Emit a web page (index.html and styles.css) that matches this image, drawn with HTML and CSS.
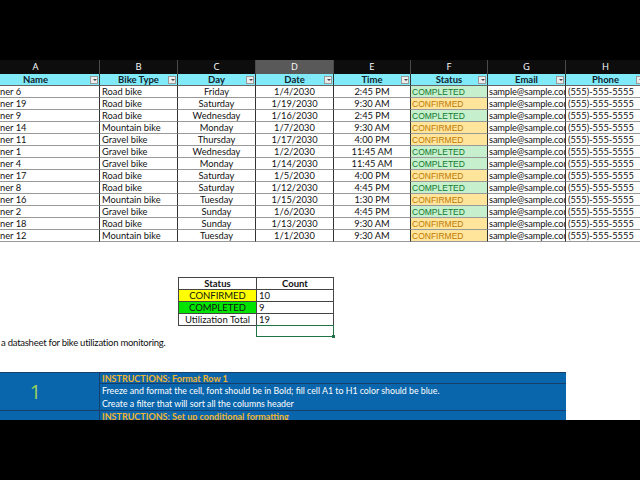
FILE: index.html
```html
<!DOCTYPE html>
<html>
<head>
<meta charset="utf-8">
<link rel="stylesheet" href="styles.css">
</head>
<body>
<div class="topbar"></div>
<main class="area">
  <div class="sheet">
    <div class="col-letter">A</div><div class="col-letter">B</div><div class="col-letter">C</div><div class="col-letter sel">D</div><div class="col-letter">E</div><div class="col-letter">F</div><div class="col-letter">G</div><div class="col-letter">H</div>

    <div class="hdr">Name<span class="filter"></span></div><div class="hdr">Bike Type<span class="filter"></span></div><div class="hdr">Day<span class="filter"></span></div><div class="hdr">Date<span class="filter"></span></div><div class="hdr">Time<span class="filter"></span></div><div class="hdr">Status<span class="filter"></span></div><div class="hdr">Email<span class="filter"></span></div><div class="hdr">Phone<span class="filter"></span></div>

    <div class="c name">Runner 6</div><div class="c">Road bike</div><div class="c ctr">Friday</div><div class="c ctr">1/4/2030</div><div class="c ctr">2:45 PM</div><div class="c st done">COMPLETED</div><div class="c em">sample@sample.com</div><div class="c">(555)-555-5555</div>
    <div class="c name">Runner 19</div><div class="c">Road bike</div><div class="c ctr">Saturday</div><div class="c ctr">1/19/2030</div><div class="c ctr">9:30 AM</div><div class="c st conf">CONFIRMED</div><div class="c em">sample@sample.com</div><div class="c">(555)-555-5555</div>
    <div class="c name">Runner 9</div><div class="c">Road bike</div><div class="c ctr">Wednesday</div><div class="c ctr">1/16/2030</div><div class="c ctr">2:45 PM</div><div class="c st done">COMPLETED</div><div class="c em">sample@sample.com</div><div class="c">(555)-555-5555</div>
    <div class="c name">Runner 14</div><div class="c">Mountain bike</div><div class="c ctr">Monday</div><div class="c ctr">1/7/2030</div><div class="c ctr">9:30 AM</div><div class="c st conf">CONFIRMED</div><div class="c em">sample@sample.com</div><div class="c">(555)-555-5555</div>
    <div class="c name">Runner 11</div><div class="c">Gravel bike</div><div class="c ctr">Thursday</div><div class="c ctr">1/17/2030</div><div class="c ctr">4:00 PM</div><div class="c st conf">CONFIRMED</div><div class="c em">sample@sample.com</div><div class="c">(555)-555-5555</div>
    <div class="c name">Runner 1</div><div class="c">Gravel bike</div><div class="c ctr">Wednesday</div><div class="c ctr">1/2/2030</div><div class="c ctr">11:45 AM</div><div class="c st done">COMPLETED</div><div class="c em">sample@sample.com</div><div class="c">(555)-555-5555</div>
    <div class="c name">Runner 4</div><div class="c">Gravel bike</div><div class="c ctr">Monday</div><div class="c ctr">1/14/2030</div><div class="c ctr">11:45 AM</div><div class="c st done">COMPLETED</div><div class="c em">sample@sample.com</div><div class="c">(555)-555-5555</div>
    <div class="c name">Runner 17</div><div class="c">Road bike</div><div class="c ctr">Saturday</div><div class="c ctr">1/5/2030</div><div class="c ctr">4:00 PM</div><div class="c st conf">CONFIRMED</div><div class="c em">sample@sample.com</div><div class="c">(555)-555-5555</div>
    <div class="c name">Runner 8</div><div class="c">Road bike</div><div class="c ctr">Saturday</div><div class="c ctr">1/12/2030</div><div class="c ctr">4:45 PM</div><div class="c st done">COMPLETED</div><div class="c em">sample@sample.com</div><div class="c">(555)-555-5555</div>
    <div class="c name">Runner 16</div><div class="c">Mountain bike</div><div class="c ctr">Tuesday</div><div class="c ctr">1/15/2030</div><div class="c ctr">1:30 PM</div><div class="c st conf">CONFIRMED</div><div class="c em">sample@sample.com</div><div class="c">(555)-555-5555</div>
    <div class="c name">Runner 2</div><div class="c">Gravel bike</div><div class="c ctr">Sunday</div><div class="c ctr">1/6/2030</div><div class="c ctr">4:45 PM</div><div class="c st done">COMPLETED</div><div class="c em">sample@sample.com</div><div class="c">(555)-555-5555</div>
    <div class="c name">Runner 18</div><div class="c">Road bike</div><div class="c ctr">Sunday</div><div class="c ctr">1/13/2030</div><div class="c ctr">9:30 AM</div><div class="c st conf">CONFIRMED</div><div class="c em">sample@sample.com</div><div class="c">(555)-555-5555</div>
    <div class="c name">Runner 12</div><div class="c">Mountain bike</div><div class="c ctr">Tuesday</div><div class="c ctr">1/1/2030</div><div class="c ctr">9:30 AM</div><div class="c st conf">CONFIRMED</div><div class="c em">sample@sample.com</div><div class="c">(555)-555-5555</div>
  </div>

  <div class="summary">
    <div class="s sh">Status</div><div class="s sh last">Count</div>
    <div class="s sctr yel">CONFIRMED</div><div class="s last">10</div>
    <div class="s sctr grn">COMPLETED</div><div class="s last">9</div>
    <div class="s sctr">Utilization Total</div><div class="s last">19</div>
    <div class="blank"></div><div class="active"><span class="handle"></span></div>
  </div>

  <p class="note">a datasheet for bike utilization monitoring.</p>

  <div class="instr">
    <div class="num">1</div>
    <div class="ititle">INSTRUCTIONS: Format Row 1</div>
    <div class="itext">Freeze and format the cell, font should be in Bold; fill cell A1 to H1 color should be blue.</div>
    <div class="itext last">Create a filter that will sort all the columns header</div>
    <div class="num2"></div>
    <div class="ititle">INSTRUCTIONS: Set up conditional formatting</div>
  </div>
</main>
<div class="bottombar"></div>
</body>
</html>
```

FILE: styles.css
```css
html, body {
  margin: 0;
  padding: 0;
  background: #000;
  overflow: hidden;
  width: 640px;
  height: 480px;
}
.topbar { height: 60px; background: #000; }
.bottombar { height: 60px; background: #000; }
.area {
  height: 360px;
  background: #fff;
  overflow: hidden;
  font-family: Lato, "Open Sans", sans-serif;
  color: #111;
}
.sheet {
  display: grid;
  grid-template-columns: 128px 78px 78px 78px 77px 77px 78px 80px;
  grid-template-rows: 14px 12px;
  grid-auto-rows: 12px;
  margin-left: -28px;
  width: 674px;
}
.col-letter {
  height: 14px;
  background: #0d0d0d;
  color: #fff;
  font-family: "Open Sans", sans-serif;
  font-size: 9.5px;
  line-height: 14px;
  text-align: center;
  border-right: 1px solid #4a4a4a;
  box-sizing: border-box;
}
.col-letter.sel { background: #595959; }
.hdr {
  position: relative;
  background: #80eaf8;
  font-weight: 700;
  font-size: 9.5px;
  line-height: 12px;
  text-align: center;
  color: #10222e;
  border-right: 1px solid #333;
  border-bottom: 1px solid #666;
  box-sizing: border-box;
}
.filter {
  position: absolute;
  right: 1px;
  top: 2px;
  width: 8px;
  height: 8px;
  box-sizing: border-box;
  background: #ececec;
  border: 1px solid #9a9a9a;
}
.filter::after {
  content: "";
  position: absolute;
  left: 1.5px;
  top: 2px;
  border-left: 2px solid transparent;
  border-right: 2px solid transparent;
  border-top: 2px solid #444;
}
.c {
  font-size: 9.3px;
  line-height: 12px;
  white-space: nowrap;
  overflow: hidden;
  text-overflow: clip;
  padding-left: 2px;
  border-right: 1px solid #333;
  border-bottom: 1px solid #999;
  box-sizing: border-box;
}
.c.name { padding-left: 12px; }
.c.ctr { text-align: center; padding-left: 0; }
.c.em { padding-left: 1px; letter-spacing: -0.15px; }
.c.st {
  font-family: "Liberation Sans", Arial, sans-serif;
  font-size: 8.5px;
  padding-left: 1px;
}
.c.done { background: #c6efce; color: #117a2b; }
.c.conf { background: #ffe49c; color: #c07a00; }

.summary {
  display: grid;
  grid-template-columns: 78px 78px;
  grid-auto-rows: 12px;
  margin: 35px 0 0 178px;
  width: 156px;
}
.s {
  font-size: 9.5px;
  line-height: 11px;
  border-left: 1px solid #444;
  border-top: 1px solid #444;
  box-sizing: border-box;
  padding-left: 2px;
  white-space: nowrap;
}
.s.last { border-right: 1px solid #444; }
.s.sh { font-weight: 700; text-align: center; padding-left: 0; }
.s.sctr { text-align: center; padding-left: 0; }
.s.yel { background: #ffff00; }
.s.grn { background: #00e400; }
.blank { border-top: 1px solid #444; }
.active {
  position: relative;
  border: 1px solid #217346;
  height: 12px;
  box-sizing: border-box;
}
.handle {
  position: absolute;
  right: -2px;
  bottom: -2px;
  width: 3px;
  height: 3px;
  background: #217346;
}
.note {
  margin: 0;
  padding-left: 1px;
  font-size: 9.5px;
  line-height: 12px;
  letter-spacing: -0.25px;
}
.instr {
  display: grid;
  grid-template-columns: 128px 466px;
  grid-template-rows: 11px 13px 14px 12px;
  width: 594px;
  margin: 23px 0 0 -28px;
  background: #0a66ac;
  border-top: 1px solid #173f6a;
  color: #fff;
}
.num {
  grid-row: 1 / 4;
  grid-column: 1;
  display: flex;
  align-items: center;
  justify-content: center;
  color: #96d35d;
  font-family: "Open Sans", sans-serif;
  font-size: 20px;
  border-right: 1px solid #173f6a;
  border-bottom: 1px solid #173f6a;
}
.num2 { grid-column: 1; border-right: 1px solid #173f6a; }
.ititle {
  grid-column: 2;
  color: #f1b42f;
  font-weight: 700;
  font-size: 9px;
  line-height: 11px;
  padding-left: 2px;
  border-bottom: 1px solid #173f6a;
  box-sizing: border-box;
  white-space: nowrap;
}
.itext {
  grid-column: 2;
  font-size: 8.8px;
  line-height: 13px;
  padding-left: 2px;
  white-space: nowrap;
}
.itext.last { border-bottom: 1px solid #173f6a; }
```
